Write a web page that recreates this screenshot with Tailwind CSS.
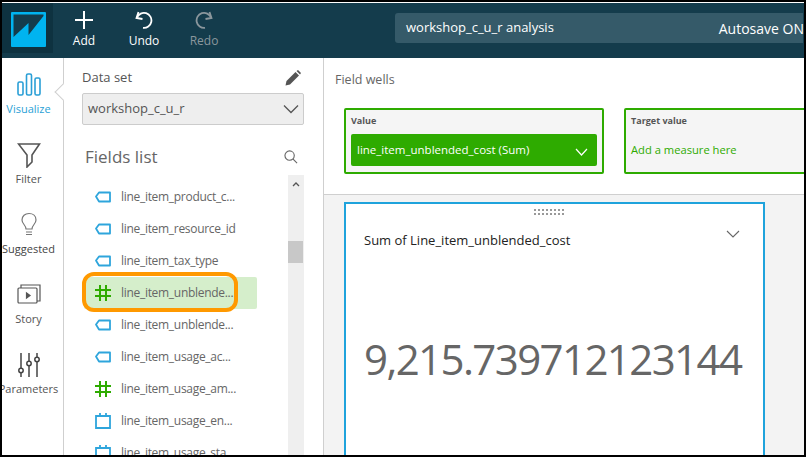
<!DOCTYPE html>
<html lang="en">
<head>
    <meta charset="UTF-8">
    <title>workshop_c_u_r analysis</title>
    <script src="https://cdn.jsdelivr.net/npm/@tailwindcss/browser@4"></script>
</head>
<body class="bg-black">
    <div class="relative w-[806px] h-[457px] bg-black pt-[2px] px-[2px] pb-[2px] overflow-hidden font-['Open_Sans',sans-serif]">
        <div class="relative w-[802px] h-[453px] bg-white pt-[1px] flex flex-col overflow-hidden">

            <!-- Top bar -->
            <header class="h-[55px] shrink-0 flex bg-[#143c4c] text-white">
                <div class="w-[51px] h-[50px] bg-[#0e3240] flex items-center justify-center pl-[1px] pt-[3px]">
                    <svg width="35" height="35" viewBox="0 0 35 35">
                        <rect width="35" height="35" rx="1" fill="#00b4f0"/>
                        <path d="M2.500 2.500H32.500V4L17.500 23V11L2.500 25Z" fill="#143c4c"/>
                    </svg>
                </div>
                <div class="w-[60px] ml-[1px] flex flex-col items-center pt-[8px]">
                    <svg width="18" height="18" viewBox="0 0 18 18" fill="none" stroke="#fff" stroke-width="2"><path d="M9 0V18M0 9H18"/></svg>
                    <span class="text-[12px] leading-[16px] font-medium mt-[4px]">Add</span>
                </div>
                <div class="w-[60px] flex flex-col items-center pt-[8px]">
                    <svg width="20" height="18" viewBox="0 0 20 18" fill="none" stroke="#fff" stroke-width="1.800"><path d="M3 6.500A7.500 7.500 0 1 1 9 16.800"/><path d="M4.500 1L2.500 7L8.500 8"/></svg>
                    <span class="text-[12px] leading-[16px] font-medium mt-[4px]">Undo</span>
                </div>
                <div class="w-[60px] flex flex-col items-center pt-[8px] text-[#8b979d]">
                    <svg width="20" height="18" viewBox="0 0 20 18" fill="none" stroke="#8b979d" stroke-width="1.800"><path d="M17 6.500A7.500 7.500 0 1 0 11 16.800"/><path d="M15.500 1L17.500 7L11.500 8"/></svg>
                    <span class="text-[12px] leading-[16px] mt-[4px]">Redo</span>
                </div>
                <div class="w-[408px] h-[30px] mt-[10px] ml-[161px] bg-[#355a69] rounded-l-[3px] flex items-center justify-between pl-[11px] text-[13px] whitespace-nowrap">
                    <span>workshop_c_u_r analysis</span>
                    <span class="text-[14px] mr-[-1px]">Autosave ON</span>
                </div>
            </header>

            <div class="flex-1 flex min-h-0">
                <!-- Icon rail -->
                <nav class="relative w-[62px] shrink-0 border-r border-[#cfcfcf] pt-[14px] text-[11px] leading-[14px] text-[#555]">
                    <div class="w-[53px] flex flex-col items-center text-[#2a9fd6] whitespace-nowrap h-[70px]">
                        <svg width="26" height="26" viewBox="0 0 26 26" fill="none" stroke="#2a9fd6" stroke-width="1.600"><rect x="2" y="10" width="5" height="13" rx="1.500"/><rect x="10.500" y="2" width="5" height="21" rx="1.500"/><rect x="19" y="6" width="5" height="17" rx="1.500"/></svg>
                        <span class="mt-[4px]">Visualize</span>
                    </div>
                    <div class="w-[53px] flex flex-col items-center whitespace-nowrap h-[70px]">
                        <svg width="24" height="26" viewBox="0 0 24 26" fill="none" stroke="#555" stroke-width="1.600"><path d="M1.500 2H22.500L15 13V20L10 25V13Z"/></svg>
                        <span class="mt-[4px]">Filter</span>
                    </div>
                    <div class="w-[53px] flex flex-col items-center whitespace-nowrap h-[70px]">
                        <svg width="18" height="26" viewBox="0 0 18 26" fill="none" stroke="#777" stroke-width="1.200"><path d="M6 17C6 13 2 12 2 8C2 4 5 1.500 9 1.500C13 1.500 16 4 16 8C16 12 12 13 12 17Z"/><path d="M6 20H12M6 22.500H12"/></svg>
                        <span class="mt-[4px] text-[#444]">Suggested</span>
                    </div>
                    <div class="w-[53px] flex flex-col items-center whitespace-nowrap h-[70px]">
                        <svg width="24" height="26" viewBox="0 0 24 26" fill="none" stroke="#555" stroke-width="1.200"><rect x="1" y="6" width="19" height="15" rx="1"/><path d="M4 6V3H23V19H20"/><path d="M9.500 11V16L13 13.500Z" fill="#555"/></svg>
                        <span class="mt-[4px]">Story</span>
                    </div>
                    <div class="w-[53px] flex flex-col items-center whitespace-nowrap h-[60px]">
                        <svg width="22" height="26" viewBox="0 0 22 26" fill="none" stroke="#444" stroke-width="1.500"><path d="M3 1V16M3 21V25M11 1V9M11 14V25M19 1V5M19 10V25"/><circle cx="3" cy="18.500" r="2.200"/><circle cx="11" cy="11.500" r="2.200"/><circle cx="19" cy="7.500" r="2.200"/></svg>
                        <span class="mt-[4px]">Parameters</span>
                    </div>
                    <!-- notch pointing at the open tab -->
                    <div class="absolute right-[-6px] top-[28px] w-[12px] h-[12px] rotate-45 bg-white border-l border-b border-[#cfcfcf]"></div>
                </nav>

                <!-- Data panel -->
                <aside class="relative w-[260px] shrink-0 border-r border-[#cfcfcf] flex flex-col">
                    <div class="flex items-center justify-between pl-[18px] pr-[22px] pt-[4px] h-[35px] shrink-0">
                        <span class="text-[13px] text-[#555]">Data set</span>
                        <svg width="16" height="16" viewBox="0 0 16 16" fill="#555"><path d="M0.500 15.500L1.500 11L10.500 2L14 5.500L5 14.500Z"/><path d="M11.500 1L13 0L16 3L15 4.500Z"/></svg>
                    </div>
                    <div class="ml-[18px] mr-[19px] h-[32px] bg-[#eeeeee] border border-[#cccccc] rounded-[2px] flex items-center justify-between pl-[5px] pr-[4px] text-[13px] text-[#555] shrink-0">
                        <span>workshop_c_u_r</span>
                        <svg width="16" height="10" viewBox="0 0 16 10" fill="none" stroke="#555" stroke-width="1.300"><path d="M1 1.500L8 8.500L15 1.500"/></svg>
                    </div>
                    <div class="flex items-center justify-between pl-[21px] pr-[25px] pt-[14px] h-[50px] shrink-0">
                        <span class="text-[17px] text-[#666]">Fields list</span>
                        <svg width="14" height="14" viewBox="0 0 15 15" fill="none" stroke="#666" stroke-width="1.200"><circle cx="6" cy="6" r="5"/><path d="M9.500 9.500L14 14"/></svg>
                    </div>
                    <div class="flex-1 flex min-h-0">
                        <ul class="w-[224px] pt-[6px] pl-[20px] pr-[31px] overflow-hidden text-[12px] tracking-[-0.3px] text-[#666] whitespace-nowrap">
                            <li class="h-[32px] flex items-center pl-[11px] gap-[10px]"><svg width="16" height="12" viewBox="0 0 16 12" fill="none" stroke="#2ea5dc" stroke-width="1.800"><path d="M1 5.500L4 1.500H15V10.500H4Z" stroke-linejoin="round"/></svg>line_item_product_c...</li>
                            <li class="h-[32px] flex items-center pl-[11px] gap-[10px]"><svg width="16" height="12" viewBox="0 0 16 12" fill="none" stroke="#2ea5dc" stroke-width="1.800"><path d="M1 5.500L4 1.500H15V10.500H4Z" stroke-linejoin="round"/></svg>line_item_resource_id</li>
                            <li class="h-[32px] flex items-center pl-[11px] gap-[10px]"><svg width="16" height="12" viewBox="0 0 16 12" fill="none" stroke="#2ea5dc" stroke-width="1.800"><path d="M1 5.500L4 1.500H15V10.500H4Z" stroke-linejoin="round"/></svg>line_item_tax_type</li>
                            <li class="h-[32px] flex items-center pl-[11px] gap-[10px] bg-[#d5eecb] rounded-[2px]"><svg width="16" height="16" viewBox="0 0 16 16" fill="none" stroke="#2eab00" stroke-width="2"><path d="M5 0V16M11 0V16M0 5H16M0 11H16"/></svg>line_item_unblende...</li>
                            <li class="h-[32px] flex items-center pl-[11px] gap-[10px]"><svg width="16" height="12" viewBox="0 0 16 12" fill="none" stroke="#2ea5dc" stroke-width="1.800"><path d="M1 5.500L4 1.500H15V10.500H4Z" stroke-linejoin="round"/></svg>line_item_unblende...</li>
                            <li class="h-[32px] flex items-center pl-[11px] gap-[10px]"><svg width="16" height="12" viewBox="0 0 16 12" fill="none" stroke="#2ea5dc" stroke-width="1.800"><path d="M1 5.500L4 1.500H15V10.500H4Z" stroke-linejoin="round"/></svg>line_item_usage_ac...</li>
                            <li class="h-[32px] flex items-center pl-[11px] gap-[10px]"><svg width="16" height="16" viewBox="0 0 16 16" fill="none" stroke="#2eab00" stroke-width="2"><path d="M5 0V16M11 0V16M0 5H16M0 11H16"/></svg>line_item_usage_am...</li>
                            <li class="h-[32px] flex items-center pl-[11px] gap-[10px]"><svg width="16" height="16" viewBox="0 0 16 16" fill="none" stroke="#2ea5dc" stroke-width="1.800"><path d="M1 3H15V15H1ZM5 0V4M11 0V4"/></svg>line_item_usage_en...</li>
                            <li class="h-[32px] flex items-center pl-[11px] gap-[10px]"><svg width="16" height="16" viewBox="0 0 16 16" fill="none" stroke="#2ea5dc" stroke-width="1.800"><path d="M1 3H15V15H1ZM5 0V4M11 0V4"/></svg>line_item_usage_sta...</li>
                        </ul>
                        <!-- Scrollbar -->
                        <div class="w-[16px] bg-[#efefef] relative">
                            <svg class="absolute left-[4px] top-[7px]" width="8" height="5" viewBox="0 0 8 5" fill="none" stroke="#555" stroke-width="1.300"><path d="M1 4L4 1L7 4"/></svg>
                            <div class="absolute top-[66px] left-0 w-[15px] h-[22px] bg-[#c8c8c8]"></div>
                        </div>
                    </div>
                </aside>

                <!-- Main -->
                <main class="flex-1 min-w-0 flex flex-col overflow-hidden bg-[#f3f3f3]">
                    <section class="h-[137px] shrink-0 bg-white border-b border-[#cfcfcf] pt-[13px] pl-[11px]">
                        <p class="text-[12.500px] leading-[18px] text-[#666]">Field wells</p>
                        <div class="flex gap-[20px] mt-[19px] pl-[9px]">
                            <div class="w-[260px] h-[66px] shrink-0 bg-[#f5f5f5] border-2 border-[#2eab00] rounded-[2px] px-[5px] pt-[4px]">
                                <p class="text-[9px] leading-[14px] font-bold text-[#555]">Value</p>
                                <div class="mt-[6px] h-[32px] bg-[#2eab00] rounded-[2px] flex items-center justify-between pl-[6px] pr-[9px] text-[11.500px] text-white whitespace-nowrap">
                                    <span>line_item_unblended_cost (Sum)</span>
                                    <svg class="mt-[3px]" width="13" height="8" viewBox="0 0 13 8" fill="none" stroke="#fff" stroke-width="1.200"><path d="M1 1L6.500 7L12 1"/></svg>
                                </div>
                            </div>
                            <div class="w-[260px] h-[66px] shrink-0 bg-[#f5f5f5] border-2 border-[#2eab00] rounded-[2px] px-[5px] pt-[4px]">
                                <p class="text-[9px] leading-[14px] font-bold text-[#555]">Target value</p>
                                <p class="mt-[6px] h-[32px] flex items-center text-[11.200px] text-[#2eab00] whitespace-nowrap">Add a measure here</p>
                            </div>
                        </div>
                    </section>
                    <section class="relative w-[421px] flex-1 ml-[20px] mt-[7px] bg-white border-2 border-[#1fa3dc] border-b-0">
                        <svg class="absolute left-[188px] top-[5px]" width="31" height="7" viewBox="0 0 31 7" fill="#999"><path d="M0 0h2v2H0zM4 0h2v2H4zM8 0h2v2H8zM12 0h2v2h-2zM16 0h2v2h-2zM20 0h2v2h-2zM24 0h2v2h-2zM28 0h2v2h-2zM0 4h2v2H0zM4 4h2v2H4zM8 4h2v2H8zM12 4h2v2h-2zM16 4h2v2h-2zM20 4h2v2h-2zM24 4h2v2h-2zM28 4h2v2h-2z"/></svg>
                        <div class="flex justify-between pl-[18px] pr-[23px] pt-[27px]">
                            <span class="text-[13px] leading-[18px] text-[#222]">Sum of Line_item_unblended_cost</span>
                            <svg class="mt-[-1px]" width="14" height="8" viewBox="0 0 14 8" fill="none" stroke="#666" stroke-width="1.100"><path d="M1 1L7 7L13 1"/></svg>
                        </div>
                        <p class="mt-[80px] pl-[18px] text-[42px] leading-[60px] tracking-[-1.600px] text-[#666] whitespace-nowrap">9,215.739712123144</p>
                    </section>
                </main>
            </div>

            <!-- Orange annotation round the selected field -->
            <div class="absolute left-[80px] top-[270px] w-[156px] h-[40px] border-[4px] border-[#ff9900] rounded-[12px]"></div>
        </div>
    </div>
</body>
</html>
